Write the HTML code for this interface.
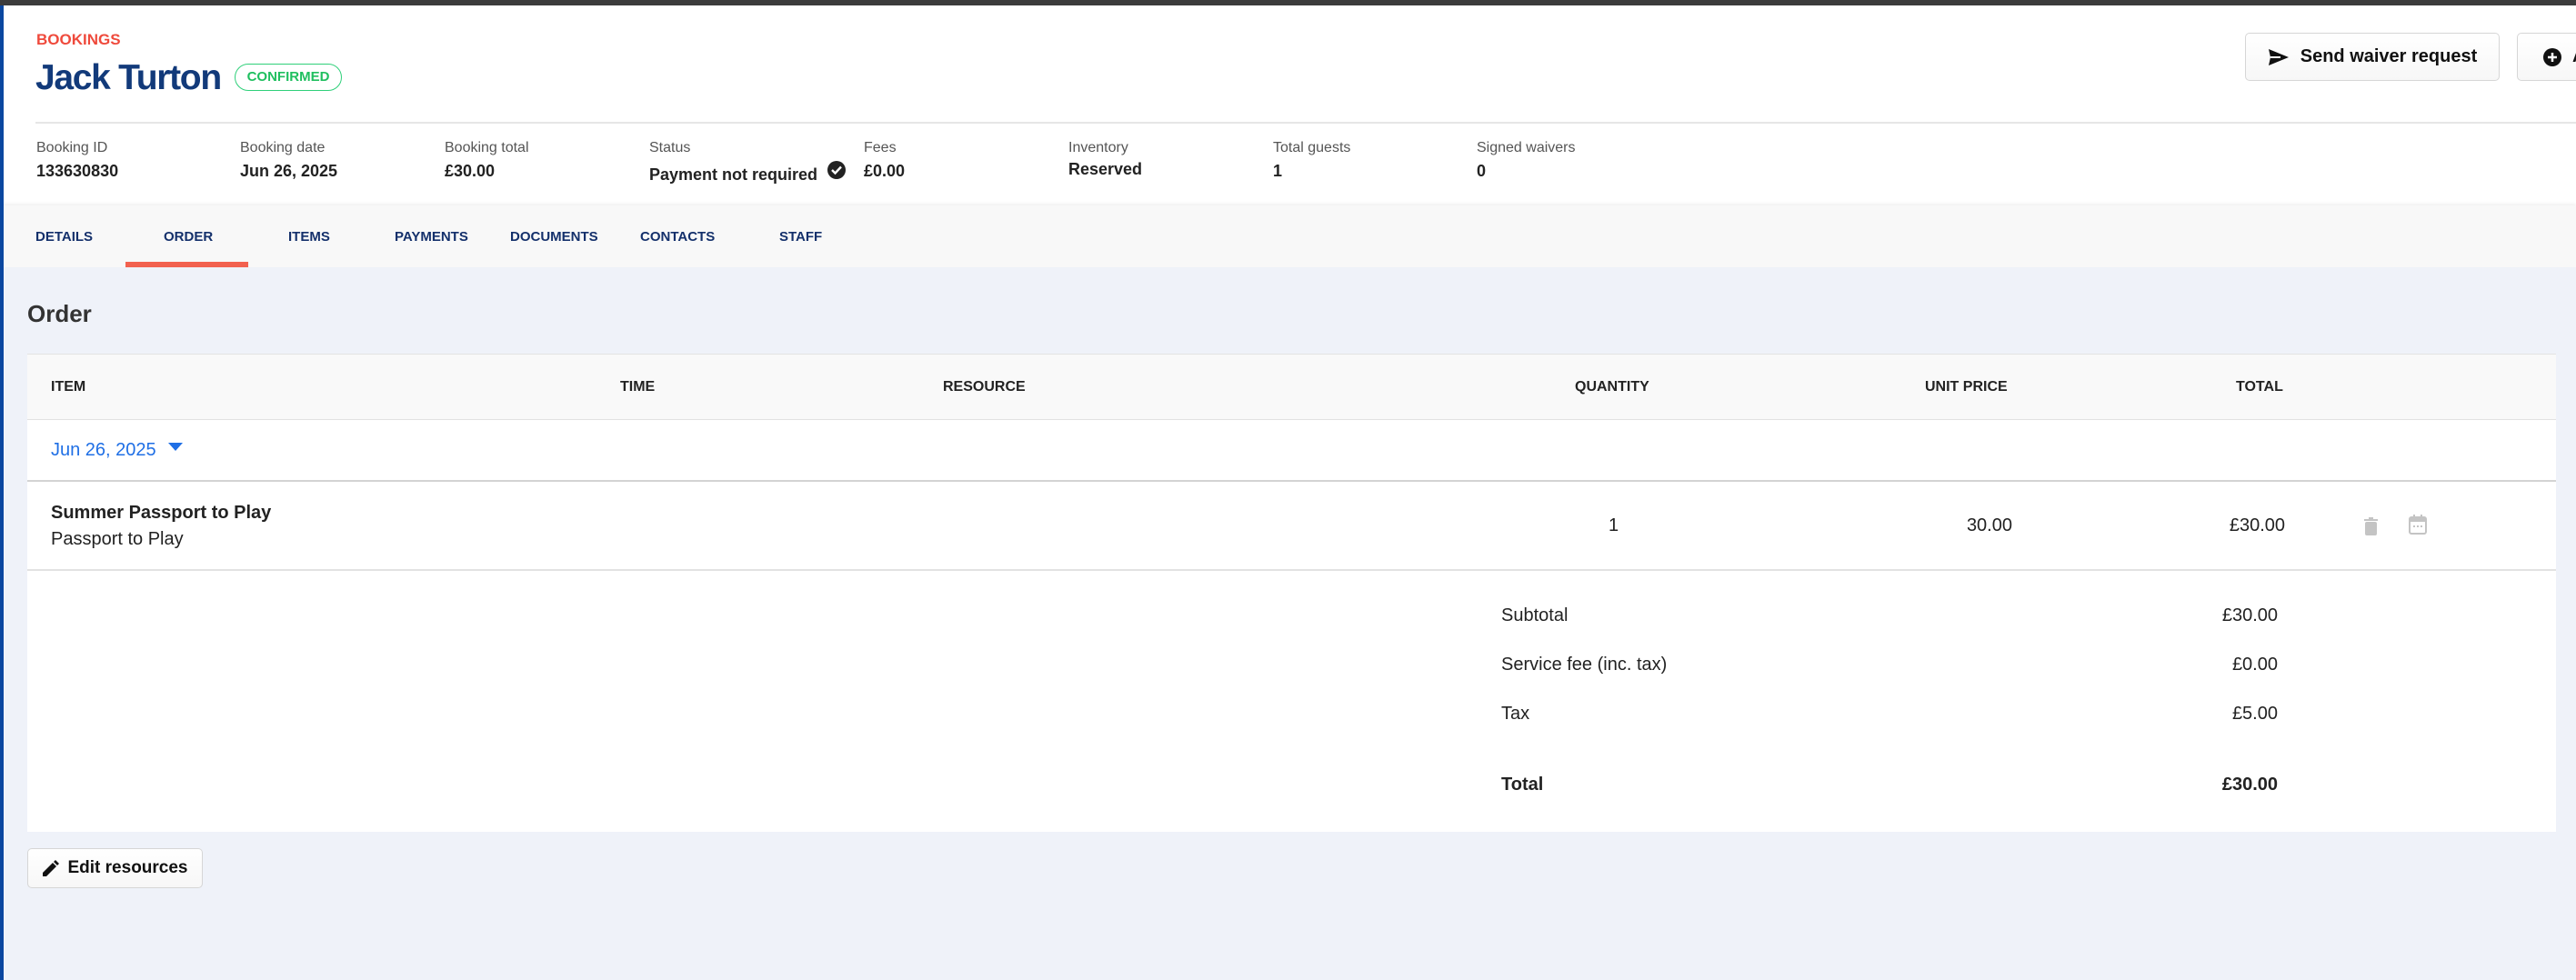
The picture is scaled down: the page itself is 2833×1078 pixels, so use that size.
<!DOCTYPE html>
<html><head><meta charset="utf-8"><style>
*{margin:0;padding:0;box-sizing:border-box}
body{width:2833px;height:1078px;overflow:hidden;background:#eff2f9;font-family:"Liberation Sans",Arial,sans-serif;position:relative;color:#222}
.a{position:absolute;white-space:nowrap}
.lbl{font-size:16px;color:#555}
.val{font-size:18px;font-weight:bold;color:#222}
.tab{font-size:15px;font-weight:bold;color:#14306b}
.th{font-size:16px;font-weight:bold;color:#222}
.td{font-size:20px;color:#222}
.btn{position:absolute;background:linear-gradient(#fff,#f7f7f7);border:1.5px solid #d6d6d6;border-radius:5px;font-weight:bold;color:#111;display:flex;align-items:center;justify-content:center}
</style></head><body>
<div class="a" style="left:0;top:0;width:2833px;height:6px;background:#3c3c3c"></div>
<div class="a" style="left:0;top:6px;width:2833px;height:220px;background:#fff"></div>
<div class="a" style="left:0;top:226px;width:2833px;height:68px;background:#f8f8f8;box-shadow:0 -2px 3px rgba(0,0,0,0.06)"></div>
<div class="a" style="left:0;top:6px;width:4px;height:1072px;background:#0b47a0"></div>

<div class="a" style="left:40px;top:34px;font-size:17px;font-weight:bold;color:#ef4a3c">BOOKINGS</div>
<div class="a" style="left:39px;top:64px;font-size:39px;font-weight:bold;color:#123a7a;letter-spacing:-1.3px">Jack Turton</div>
<div class="a" style="left:258px;top:70px;width:118px;height:30px;border:1.5px solid #2fd07a;border-radius:15px;color:#1fbf5f;font-size:15px;font-weight:bold;text-align:center;line-height:27px">CONFIRMED</div>

<div class="btn" style="left:2469px;top:36px;width:280px;height:53px;font-size:20px"><svg width="24" height="20" viewBox="0 0 24 20" style="margin-right:12px"><path d="M1 1 L23 10 L1 19 L3 10 Z" fill="#111"/><path d="M3 10 H14" stroke="#fff" stroke-width="2"/></svg>Send waiver request</div>
<div class="btn" style="left:2768px;top:36px;width:120px;height:53px;font-size:20px;justify-content:flex-start;padding-left:28px"><svg width="20" height="20" viewBox="0 0 20 20"><circle cx="10" cy="10" r="10" fill="#111"/><path d="M10 5V15M5 10H15" stroke="#fff" stroke-width="2.5"/></svg><span style="margin-left:12px">A</span></div>

<div class="a" style="left:39px;top:134px;width:2794px;height:2px;background:#e6e6e6"></div>

<div class="a lbl" style="left:40px;top:154px">Booking ID</div><div class="a val" style="left:40px;top:178px">133630830</div>
<div class="a lbl" style="left:264px;top:154px">Booking date</div><div class="a val" style="left:264px;top:178px">Jun 26, 2025</div>
<div class="a lbl" style="left:489px;top:154px">Booking total</div><div class="a val" style="left:489px;top:178px">£30.00</div>
<div class="a lbl" style="left:714px;top:154px">Status</div><div class="a val" style="left:714px;top:182px">Payment not required</div>
<svg class="a" style="left:910px;top:177px" width="20" height="20" viewBox="0 0 20 20"><circle cx="10" cy="10" r="10" fill="#222"/><path d="M5 10 L8.5 13.5 L15 6.5" stroke="#fff" stroke-width="2.4" fill="none"/></svg>
<div class="a lbl" style="left:950px;top:154px">Fees</div><div class="a val" style="left:950px;top:178px">£0.00</div>
<div class="a lbl" style="left:1175px;top:154px">Inventory</div><div class="a val" style="left:1175px;top:176px">Reserved</div>
<div class="a lbl" style="left:1400px;top:154px">Total guests</div><div class="a val" style="left:1400px;top:178px">1</div>
<div class="a lbl" style="left:1624px;top:154px">Signed waivers</div><div class="a val" style="left:1624px;top:178px">0</div>

<div class="a tab" style="left:39px;top:252px">DETAILS</div>
<div class="a tab" style="left:180px;top:252px">ORDER</div>
<div class="a tab" style="left:317px;top:252px">ITEMS</div>
<div class="a tab" style="left:434px;top:252px">PAYMENTS</div>
<div class="a tab" style="left:561px;top:252px">DOCUMENTS</div>
<div class="a tab" style="left:704px;top:252px">CONTACTS</div>
<div class="a tab" style="left:857px;top:252px">STAFF</div>
<div class="a" style="left:138px;top:288px;width:135px;height:6px;background:#f2614f"></div>

<div class="a" style="left:30px;top:330px;font-size:26px;font-weight:bold;color:#333">Order</div>

<div class="a" style="left:30px;top:389px;width:2781px;height:526px;background:#fff;border-top:1px solid #e3e3e3"></div>
<div class="a" style="left:30px;top:390px;width:2781px;height:72px;background:#f9f9f9;border-bottom:1.5px solid #e2e2e2"></div>
<div class="a th" style="left:56px;top:417px">ITEM</div>
<div class="a th" style="left:682px;top:417px">TIME</div>
<div class="a th" style="left:1037px;top:417px">RESOURCE</div>
<div class="a th" style="left:1732px;top:417px">QUANTITY</div>
<div class="a th" style="left:2117px;top:417px">UNIT PRICE</div>
<div class="a th" style="left:2459px;top:417px">TOTAL</div>

<div class="a" style="left:56px;top:484px;font-size:20px;color:#1f6fe5">Jun 26, 2025</div>
<svg class="a" style="left:185px;top:487px" width="16" height="10" viewBox="0 0 16 10"><path d="M0 0H16L8 9Z" fill="#1f6fe5"/></svg>
<div class="a" style="left:30px;top:528px;width:2781px;height:2px;background:#d3d3d3"></div>

<div class="a" style="left:56px;top:553px;font-size:20px;font-weight:bold;color:#222">Summer Passport to Play</div>
<div class="a td" style="left:56px;top:582px">Passport to Play</div>
<div class="a td" style="left:1769px;top:567px">1</div>
<div class="a td" style="left:2113px;top:567px;width:100px;text-align:right">30.00</div>
<div class="a td" style="left:2413px;top:567px;width:100px;text-align:right">£30.00</div>
<svg class="a" style="left:2599px;top:569px" width="17" height="20" viewBox="0 0 17 20"><rect x="1" y="2" width="15" height="2" fill="#c4c4c4"/><rect x="6" y="0" width="5" height="3" fill="#c4c4c4"/><rect x="2" y="5" width="13" height="15" rx="2" fill="#c4c4c4"/></svg>
<svg class="a" style="left:2649px;top:566px" width="20" height="22" viewBox="0 0 20 22"><rect x="1" y="3" width="18" height="18" rx="2" fill="none" stroke="#c4c4c4" stroke-width="2"/><rect x="1" y="3" width="18" height="5" fill="#c4c4c4"/><rect x="5" y="0" width="2" height="4" fill="#c4c4c4"/><rect x="13" y="0" width="2" height="4" fill="#c4c4c4"/><rect x="5" y="12" width="2" height="2" fill="#c4c4c4"/><rect x="9" y="12" width="2" height="2" fill="#c4c4c4"/><rect x="13" y="12" width="2" height="2" fill="#c4c4c4"/></svg>
<div class="a" style="left:30px;top:626px;width:2781px;height:1.5px;background:#e2e2e2"></div>

<div class="a td" style="left:1651px;top:666px">Subtotal</div><div class="a td" style="left:2305px;top:666px;width:200px;text-align:right">£30.00</div>
<div class="a td" style="left:1651px;top:720px">Service fee (inc. tax)</div><div class="a td" style="left:2305px;top:720px;width:200px;text-align:right">£0.00</div>
<div class="a td" style="left:1651px;top:774px">Tax</div><div class="a td" style="left:2305px;top:774px;width:200px;text-align:right">£5.00</div>
<div class="a td" style="left:1651px;top:852px;font-weight:bold">Total</div><div class="a td" style="left:2305px;top:852px;width:200px;text-align:right;font-weight:bold">£30.00</div>

<div class="btn" style="left:30px;top:933px;width:193px;height:44px;font-size:19px"><svg width="18" height="18" viewBox="0 0 18 18" style="margin-right:10px"><path d="M0 18 L0 14 L11 3 L15 7 L4 18 Z" fill="#111"/><path d="M12 2 L14 0 L18 4 L16 6 Z" fill="#111"/></svg>Edit resources</div>
</body></html>
